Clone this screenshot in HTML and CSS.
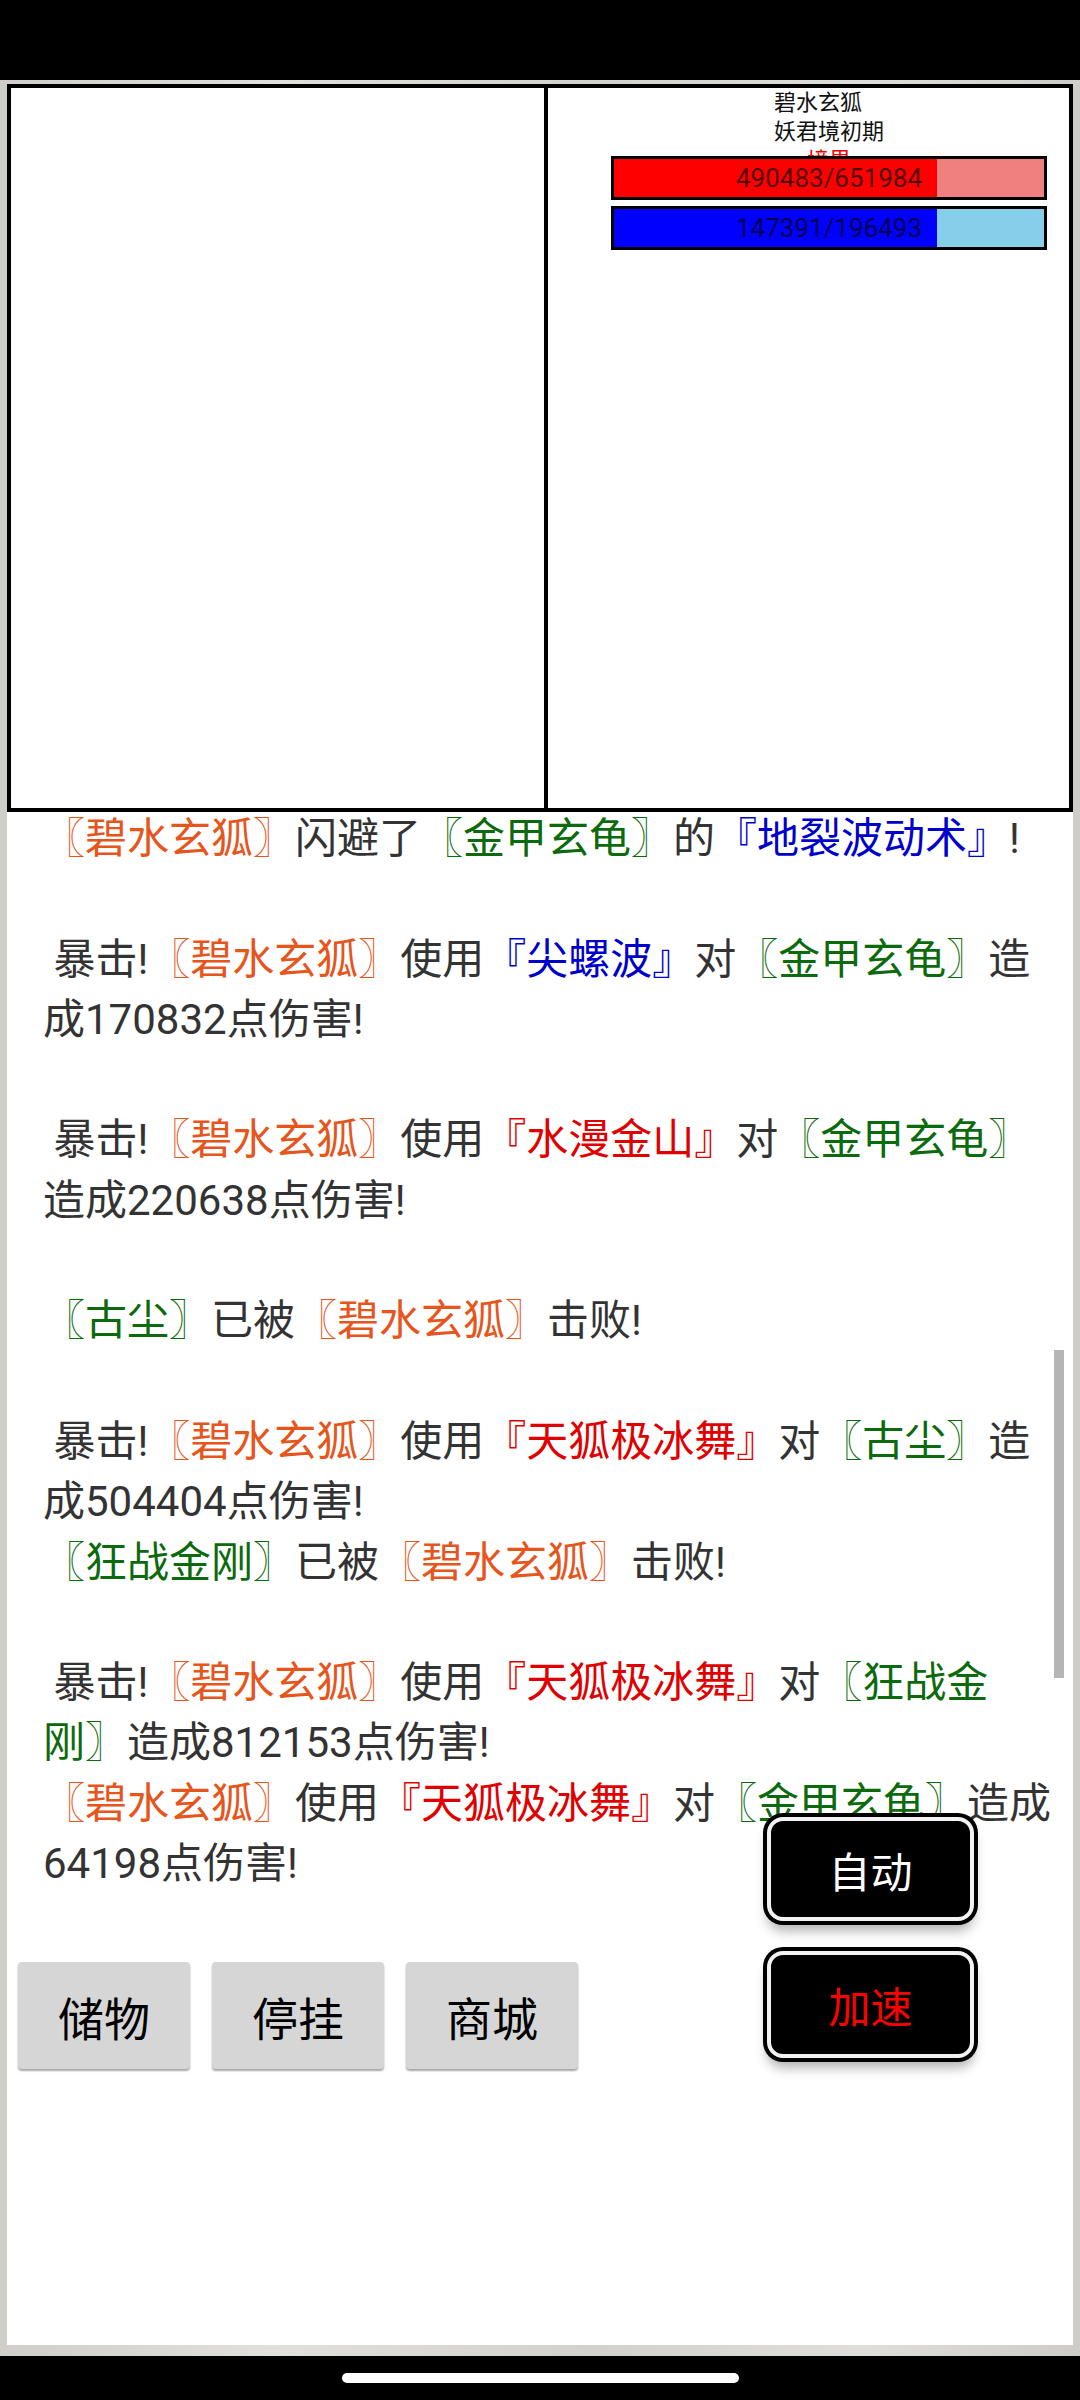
FILE: index.html
```html
<!DOCTYPE html>
<html lang="zh">

<head>
  <meta charset="UTF-8">
  <title>战斗</title>
  <link rel="stylesheet" href="styles.css">
</head>

<body>
  <div class="status-bar"></div>

  <div class="screen">
    <div class="panel">
      <div class="arena">
        <div class="side"></div>
        <div class="side enemy">
          <div class="enemy-info">
            <div>碧水玄狐</div>
            <div>妖君境初期</div>
            <div class="realm">境界</div>
          </div>
          <div class="bar hp">
            <div class="bar-fill" style="width: 75.23%"></div>
            <div class="bar-label">490483/651984</div>
          </div>
          <div class="bar mp">
            <div class="bar-fill" style="width: 75.01%"></div>
            <div class="bar-label">147391/196493</div>
          </div>
        </div>
      </div>

      <div class="log">
        <p class="entry spaced"><span class="me">〖碧水玄狐〗</span>闪避了<span class="foe">〖金甲玄龟〗</span>的<span class="skill-blue">『地裂波动术』</span>!</p>
        <p class="entry spaced">&nbsp;暴击!<span class="me">〖碧水玄狐〗</span>使用<span class="skill-blue">『尖螺波』</span>对<span class="foe">〖金甲玄龟〗</span>造成170832点伤害!</p>
        <p class="entry spaced">&nbsp;暴击!<span class="me">〖碧水玄狐〗</span>使用<span class="skill-red">『水漫金山』</span>对<span class="foe">〖金甲玄龟〗</span>造成220638点伤害!</p>
        <p class="entry spaced"><span class="foe">〖古尘〗</span>已被<span class="me">〖碧水玄狐〗</span>击败!</p>
        <p class="entry">&nbsp;暴击!<span class="me">〖碧水玄狐〗</span>使用<span class="skill-red">『天狐极冰舞』</span>对<span class="foe">〖古尘〗</span>造成504404点伤害!</p>
        <p class="entry spaced"><span class="foe">〖狂战金刚〗</span>已被<span class="me">〖碧水玄狐〗</span>击败!</p>
        <p class="entry">&nbsp;暴击!<span class="me">〖碧水玄狐〗</span>使用<span class="skill-red">『天狐极冰舞』</span>对<span class="foe">〖狂战金刚〗</span>造成812153点伤害!</p>
        <p class="entry"><span class="me">〖碧水玄狐〗</span>使用<span class="skill-red">『天狐极冰舞』</span>对<span class="foe">〖金甲玄龟〗</span>造成64198点伤害!</p>
      </div>

      <div class="actions">
        <button class="menu-btn">储物</button>
        <button class="menu-btn">停挂</button>
        <button class="menu-btn">商城</button>
      </div>

      <div class="scroll-thumb"></div>

      <div class="floating">
        <button class="round-btn">自动</button>
        <button class="round-btn speed">加速</button>
      </div>
    </div>
  </div>

  <div class="nav-bar">
    <span class="home-pill"></span>
  </div>
</body>

</html>
```

FILE: styles.css
```css
body {
  margin: 0;
  width: 1080px;
  height: 2400px;
  background-color: #000;
  font-family: Roboto, "Noto Sans CJK SC", sans-serif;
  color: #333;
}

.status-bar {
  height: 80px;
  background-color: #000;
}

.screen {
  height: 2276px;
  box-sizing: border-box;
  padding: 4px 7px 11px;
  background: linear-gradient(90deg, #cfceca, #e1e0dc 25%, #d2d1cd 55%, #dfded9 80%, #cdccc8);
}

.panel {
  position: relative;
  height: 100%;
  background-color: #fff;
}

/* battle field */
.arena {
  height: 728px;
  box-sizing: border-box;
  border: 4px solid #000;
  display: grid;
  grid-template-columns: 537px 1fr;
}

.side {
  border-right: 4px solid #000;
}

.side.enemy {
  border-right: none;
  display: flex;
  flex-direction: column;
  align-items: center;
  padding: 0 22px 0 63px;
}

.enemy-info {
  height: 68px;
  display: flex;
  flex-direction: column;
  font-size: 22px;
  line-height: 29px;
  color: #111;
}

.realm {
  align-self: center;
  color: #e00;
}

.bar {
  position: relative;
  align-self: stretch;
  height: 44px;
  box-sizing: border-box;
  border: 3px solid #000;
}

.bar.hp {
  background-color: #f08080;
}

.bar.mp {
  margin-top: 6px;
  background-color: #87ceeb;
}

.bar-fill {
  height: 100%;
}

.hp .bar-fill {
  background-color: #f00;
}

.mp .bar-fill {
  background-color: #00f;
}

.bar-label {
  position: absolute;
  inset: 0;
  display: flex;
  justify-content: center;
  align-items: center;
  font-size: 26px;
  color: rgba(0, 0, 0, 0.7);
}

/* battle log */
.log {
  height: 1134px;
  margin-top: -3px;
  padding: 0 20px 0 36px;
  overflow: hidden;
  font-size: 42px;
  line-height: 60.3px;
  text-spacing-trim: space-all;
}

.entry {
  margin: 0;
}

.entry.spaced {
  margin-bottom: 60.3px;
}

.me {
  color: #e6561c;
}

.foe {
  color: #0b6a0b;
}

.skill-blue {
  color: #0000cd;
}

.skill-red {
  color: #e00000;
}

.scroll-thumb {
  position: absolute;
  right: 9px;
  top: 1266px;
  width: 10px;
  height: 328px;
  background-color: #b5b5b5;
}

/* bottom menu */
.actions {
  display: flex;
  gap: 22px;
  margin-top: 19px;
  padding-left: 11px;
}

.menu-btn {
  width: 172px;
  height: 107px;
  border: none;
  border-radius: 4px;
  background-color: #d6d6d6;
  box-shadow: 0 2px 2px rgba(0, 0, 0, 0.35);
  font-family: Roboto, "Noto Sans CJK SC", sans-serif;
  font-size: 46px;
  color: #000;
}

.floating {
  position: absolute;
  top: 1733px;
  right: 99px;
  display: flex;
  flex-direction: column;
  gap: 30px;
}

.round-btn {
  width: 207px;
  height: 104px;
  border: 4px solid #f2f2f2;
  border-radius: 16px;
  background-color: #000;
  box-shadow: 0 0 0 4px #000, 0 10px 12px rgba(0, 0, 0, 0.3);
  font-family: Roboto, "Noto Sans CJK SC", sans-serif;
  font-size: 42px;
  color: #fff;
}

.round-btn.speed {
  height: 107px;
  color: #f00;
}

.nav-bar {
  height: 44px;
  display: flex;
  justify-content: center;
  align-items: center;
  background-color: #000;
}

.home-pill {
  width: 397px;
  height: 10px;
  border-radius: 5px;
  background-color: #fff;
}
```
